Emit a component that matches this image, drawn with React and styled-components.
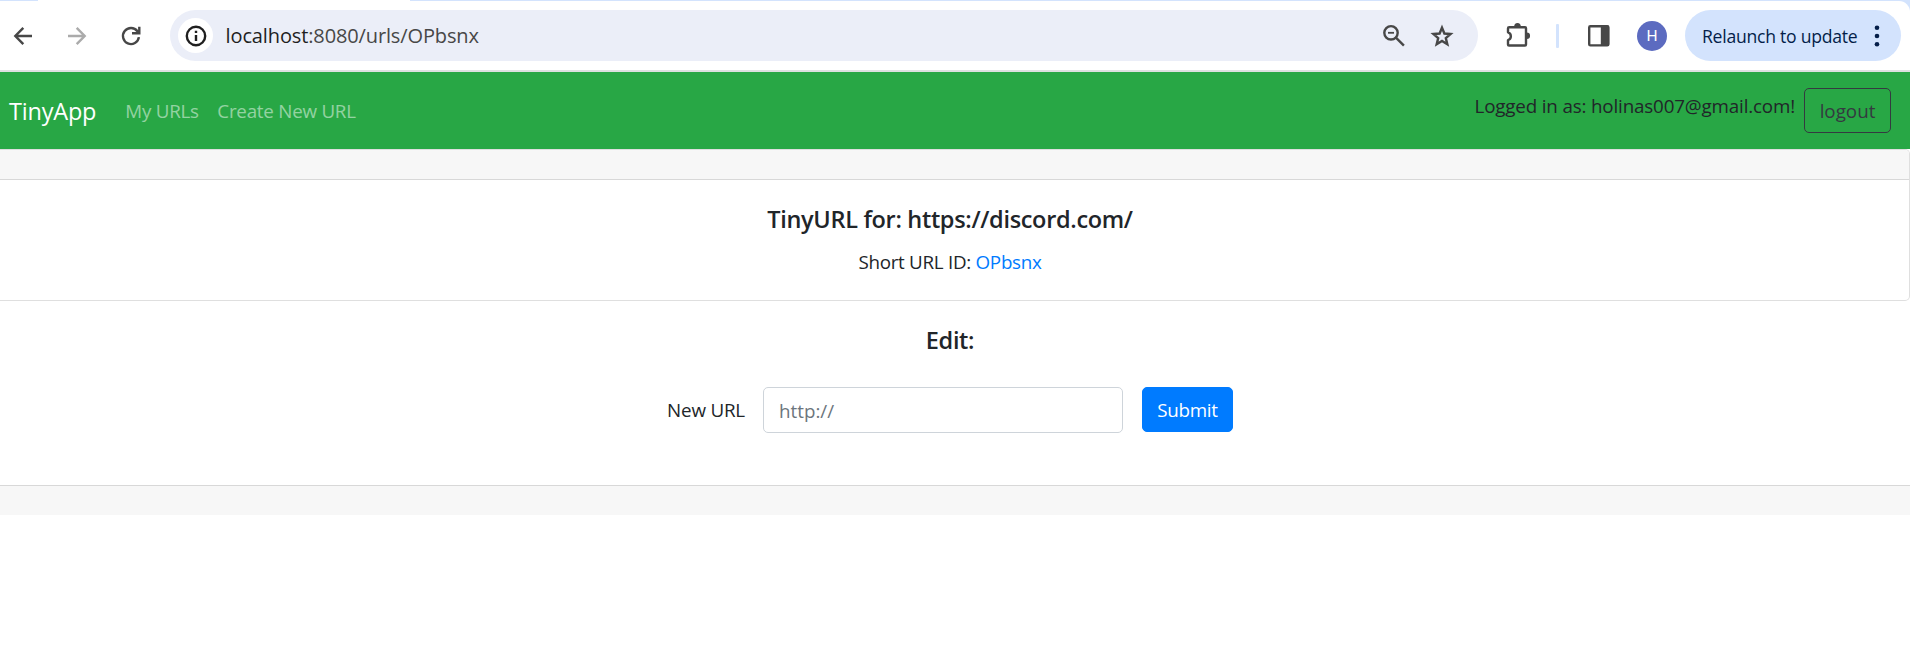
import React from 'react';
import styled, { createGlobalStyle } from 'styled-components';

const GlobalStyle = createGlobalStyle`
  *, *::before, *::after { box-sizing: border-box; }
  body {
    margin: 0;
    background: #fff;
    color: #212529;
    font-family: 'Open Sans', 'Noto Sans', sans-serif;
    font-size: 18.8px;
    line-height: 30px;
    overflow-x: hidden;
  }
`;

/* ---------- browser toolbar ---------- */

const Chrome = styled.header`
  height: 72px;
  background: #d3e3fd;
  display: grid;
  grid-template-rows: 1px 71px;
`;

const TabStrip = styled.div`
  display: flex;
`;

const ActiveTab = styled.div`
  width: 372px;
  margin-left: 38px;
  background: #fff;
`;

const Toolbar = styled.div`
  display: flex;
  align-items: center;
  padding: 0 9px;
  background: #fff;
  border-bottom: 2px solid #dde0e0;
  border-top-right-radius: 11px;
`;

const Icon = styled.svg`
  display: block;
  flex: none;
  width: 28px;
  height: 28px;
  margin-left: ${({ $before = 0 }) => $before}px;
  fill: none;
  stroke: ${({ $color = '#474747' }) => $color};
  stroke-width: 2.4;
`;

const AddressBar = styled.div`
  display: flex;
  align-items: center;
  width: 1308px;
  height: 51px;
  margin-left: 25px;
  padding: 0 22px 0 8px;
  border-radius: 26px;
  background: #ebeef8;
`;

const SiteInfo = styled.div`
  display: grid;
  place-items: center;
  width: 35px;
  height: 35px;
  border-radius: 50%;
  background: #fff;
`;

const Address = styled.div`
  flex: 1;
  margin-left: 12.6px;
  font-size: 20px;
  letter-spacing: -0.13px;
  color: #474747;
`;

const Host = styled.span`
  color: #1f1f1f;
`;

const Divider = styled.div`
  width: 3px;
  height: 24px;
  margin-left: 23px;
  border-radius: 1px;
  background: #d3e3fd;
`;

const Avatar = styled.div`
  width: 30px;
  height: 30px;
  margin-left: 24px;
  border-radius: 50%;
  background: #5c6bc0;
  color: #fff;
  font: 400 15.5px/30px Roboto, sans-serif;
  text-align: center;
`;

const UpdatePill = styled.div`
  display: flex;
  align-items: center;
  justify-content: space-between;
  width: 216px;
  height: 51px;
  margin-left: 18px;
  padding: 0 10px 0 17px;
  border-radius: 26px;
  background: #d3e3fd;
  color: #041e49;
  font-size: 17.6px;
  letter-spacing: -0.25px;
  white-space: nowrap;
`;

/* ---------- page ---------- */

const Navbar = styled.nav`
  display: flex;
  align-items: center;
  height: 77px;
  padding: 0 19px 0 9px;
  background: #28a745;
`;

const Brand = styled.a`
  margin-right: 29px;
  color: #fff;
  font-size: 23.5px;
  letter-spacing: -0.2px;
`;

const NavLink = styled.a`
  margin-right: 18.5px;
  color: rgba(255, 255, 255, 0.5);
  letter-spacing: -0.24px;
`;

const Account = styled.div`
  display: flex;
  align-items: flex-start;
  margin-left: auto;
`;

const LoggedIn = styled.span`
  margin: 3px 9px 0 0;
  letter-spacing: -0.16px;
`;

const Button = styled.button`
  width: ${({ $width }) => $width}px;
  height: 45px;
  padding: 0;
  border: 1px solid ${({ $outline }) => ($outline ? '#343a40' : '#007bff')};
  border-radius: 5px;
  background: ${({ $outline }) => ($outline ? 'transparent' : '#007bff')};
  color: ${({ $outline }) => ($outline ? '#343a40' : '#fff')};
  font: inherit;
  letter-spacing: ${({ $outline }) => ($outline ? 0 : -0.25)}px;
`;

const Card = styled.section`
  border: solid #dfdfdf;
  border-width: 1px 1px 1px 0;
  border-radius: 0 5px 5px 0;
  height: 152px;
  overflow: hidden;
`;

const CardHeader = styled.div`
  height: 30px;
  background: #f7f7f7;
  border-bottom: 1px solid #d8d8d8;
`;

const CardBody = styled.div`
  padding: 24px 9px 0 0;
  text-align: center;
`;

const Title = styled.h5`
  margin: 0;
  font-size: 23.5px;
  font-weight: 600;
  line-height: 30px;
  letter-spacing: -0.32px;
`;

const ShortId = styled.p`
  margin: 13px 0 0;
  letter-spacing: -0.28px;

  a { color: #007bff; }
`;

const EditSection = styled.section`
  height: 184px;
  padding: 24px 10px 0 0;
  text-align: center;
`;

const Form = styled.form`
  display: flex;
  justify-content: center;
  margin-top: 32px;
`;

const Label = styled.label`
  width: 78px;
  margin-right: 18px;
  line-height: 47px;
  letter-spacing: -0.2px;
  white-space: nowrap;
`;

const Input = styled.input`
  width: 360px;
  height: 46px;
  margin-right: 19px;
  padding: 2px 15px 0;
  border: 1px solid #ced4da;
  border-radius: 5px;
  background: #fff;
  font: inherit;

  &::placeholder { color: #6c757d; opacity: 1; }
`;

const CardFooter = styled.footer`
  height: 30px;
  background: #f7f7f7;
  border-top: 1px solid #d8d8d8;
`;

export default function App() {
  return (
    <>
      <GlobalStyle />
      <Chrome>
        <TabStrip><ActiveTab /></TabStrip>
        <Toolbar>
          <Icon viewBox="0 0 28 28"><path d="M23 14H7M14.3 5.8 6.3 14l8 8.2" /></Icon>
          <Icon viewBox="0 0 28 28" $before={26} $color="#ababab"><path d="M5 14h16M13.7 5.8l8 8.2-8 8.2" /></Icon>
          <Icon viewBox="0 0 28 28" $before={26}>
            <path d="M21.9 15.2A8 8 0 1 1 20.4 9.3L21.5 10.6M22.3 4.8v6.5h-7.3" />
          </Icon>
          <AddressBar>
            <SiteInfo>
              <Icon viewBox="0 0 28 28" $color="#1f1f1f">
                <circle cx="14" cy="14" r="9.2" />
                <path d="M14 13v6M14 8.8v2.3" />
              </Icon>
            </SiteInfo>
            <Address><Host>localhost</Host>:8080/urls/OPbsnx</Address>
            <Icon viewBox="0 0 28 28">
              <circle cx="11" cy="10.8" r="6.7" />
              <path d="m15.9 15.7 8 8" />
              <path d="M8 10.8h6" strokeWidth="1.8" />
            </Icon>
            <Icon viewBox="0 0 28 28" $before={20}>
              <path d="m14 5.7 2.4 5.8 6.2.5-4.8 4.1 1.5 6.1-5.3-3.3-5.3 3.3 1.5-6.1L5.4 12l6.2-.5z" />
            </Icon>
          </AddressBar>
          <Icon viewBox="0 0 28 28" $before={27}>
            <path strokeLinejoin="round" d="M4.2 5.2H20a1 1 0 0 1 1 1V22.5a1 1 0 0 1-1 1H4a1 1 0 0 1-1-1v-4.4c3.8-1 3.8-6.8 0-7.8V6.4a1.2 1.2 0 0 1 1.2-1.2z" />
            <path fill="#474747" stroke="none" d="M9.2 4.5a3.2 3.4 0 0 1 6.6 0zM21.8 10.6a3.2 3.2 0 0 1 0 6.5z" />
          </Icon>
          <Divider />
          <Icon viewBox="0 0 28 28" $before={26}>
            <rect x="4.2" y="4.2" width="19.2" height="19.2" rx="1.2" />
            <path fill="#474747" stroke="none" d="M15.8 3.5h7.6v20.4h-7.6z" />
          </Icon>
          <Avatar>H</Avatar>
          <UpdatePill>
            Relaunch to update
            <Icon viewBox="0 0 28 28" $color="none">
              <g fill="#041e49">
                <circle cx="14" cy="5.7" r="2.3" />
                <circle cx="14" cy="14" r="2.3" />
                <circle cx="14" cy="22.3" r="2.3" />
              </g>
            </Icon>
          </UpdatePill>
        </Toolbar>
      </Chrome>

      <Navbar>
        <Brand>TinyApp</Brand>
        <NavLink>My URLs</NavLink>
        <NavLink>Create New URL</NavLink>
        <Account>
          <LoggedIn>Logged in as: holinas007@gmail.com!</LoggedIn>
          <Button $width={87} $outline>logout</Button>
        </Account>
      </Navbar>

      <Card>
        <CardHeader />
        <CardBody>
          <Title>TinyURL for: https://discord.com/</Title>
          <ShortId>Short URL ID: <a>OPbsnx</a></ShortId>
        </CardBody>
      </Card>
      <EditSection>
        <Title>Edit:</Title>
        <Form>
          <Label htmlFor="new-url">New URL</Label>
          <Input id="new-url" placeholder="http://" />
          <Button type="button" $width={91}>Submit</Button>
        </Form>
      </EditSection>
      <CardFooter />
    </>
  );
}
